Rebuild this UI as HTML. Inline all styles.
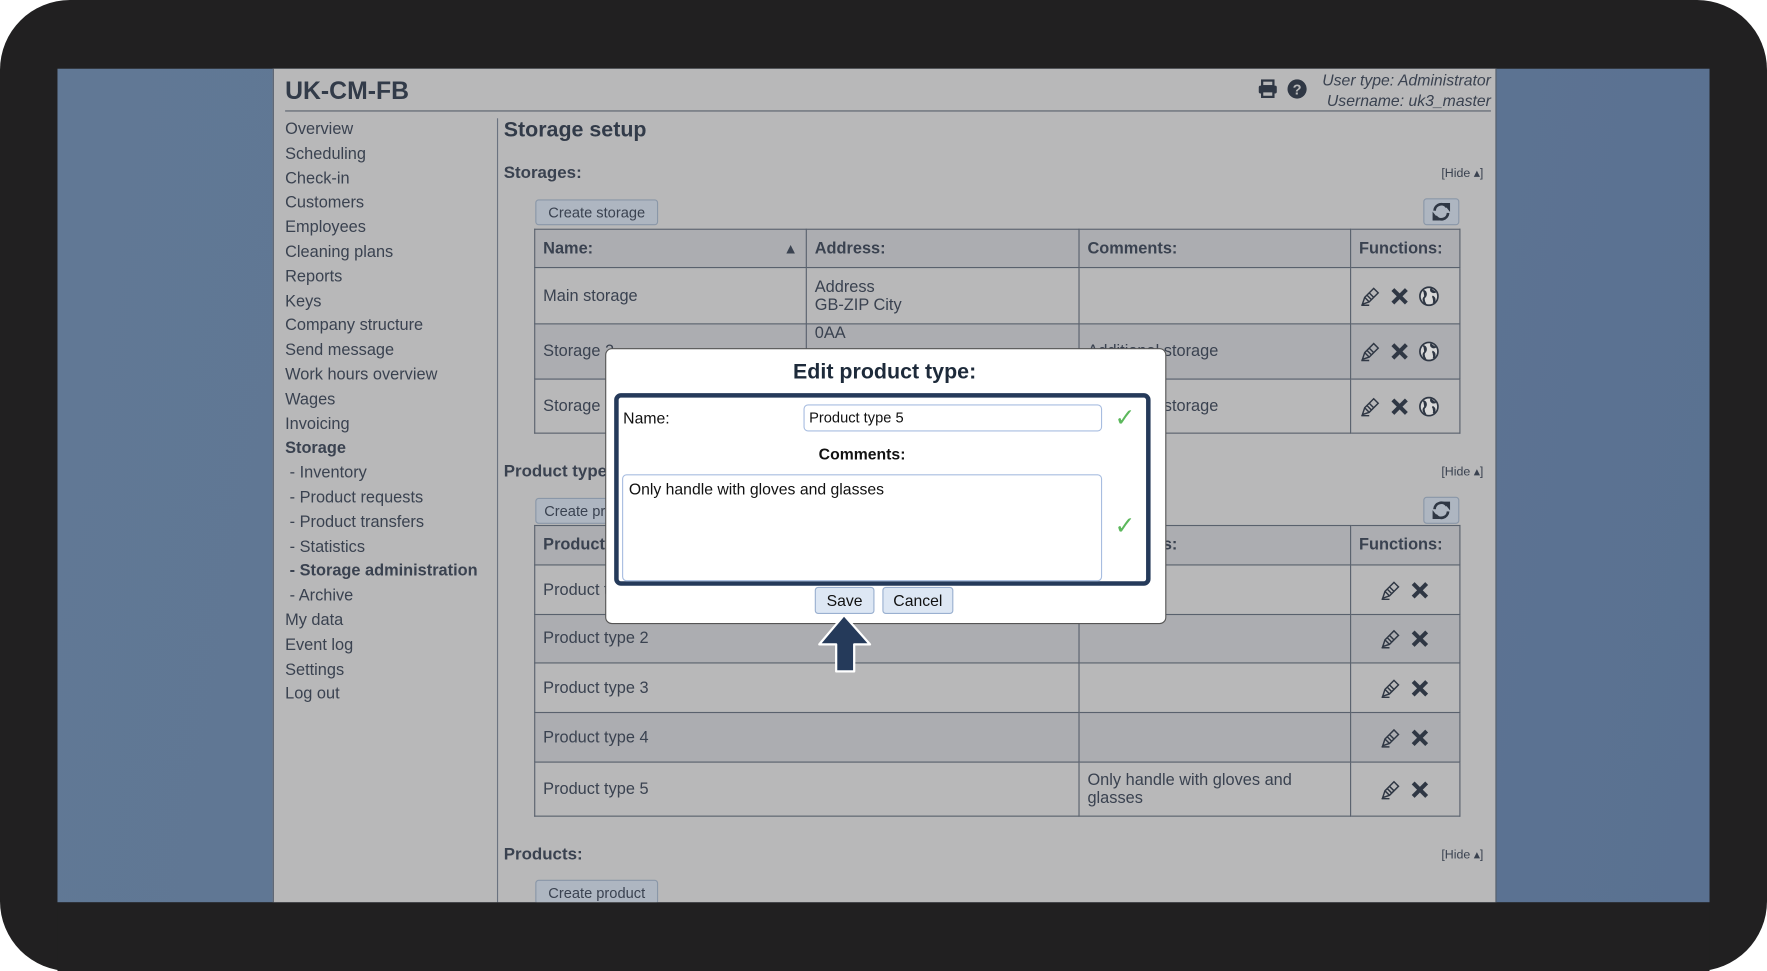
<!DOCTYPE html>
<html><head><meta charset="utf-8"><style>
html,body{margin:0;padding:0;width:1767px;height:971px;overflow:hidden;background:#fff;}
#s{position:absolute;left:0;top:0;width:1568px;height:862px;transform:scale(1.12691,1.1265);transform-origin:0 0;font-family:"Liberation Sans",Arial,sans-serif;color:#3a4250;}
.a{position:absolute;}
.frame{left:0;top:0;width:1568px;height:862px;background:#212021;border-radius:62px;}
.scr{left:51px;top:61px;width:1466px;height:740px;background:linear-gradient(100deg,#617895,#5e7593 60%,#5a7191);overflow:hidden;}
.page{left:242px;top:61px;width:1086px;height:740px;background:#b8b8b9;border-left:1px solid #505a68;border-right:1px solid #505a68;box-sizing:border-box;}
.nav{font-size:14.5px;line-height:21.8px;}
.btn{background:#aeb6c1;border:1px solid #8a97a8;border-radius:3px;font-size:13px;color:#3a4250;text-align:center;box-sizing:border-box;}
table{border-collapse:collapse;position:absolute;font-size:14.5px;color:#3a4250;}
td{border:1px solid #59616d;padding:0 7px;vertical-align:middle;}
th{border:1px solid #59616d;padding:0 7px;text-align:left;font-size:14.5px;background:#acadb1;}
.d{background:#acadb1;}
.hide{font-size:11px;color:#3a4250;}
svg{vertical-align:middle;}
</style></head><body><div id="s">
<div class="a frame"></div>
<div class="a scr"></div>
<div class="a page"></div>
<div class="a" style="left:253px;top:68px;font-size:22px;font-weight:bold;color:#323b49">UK-CM-FB</div>
<div class="a" style="left:253px;top:98px;width:1070px;height:1px;background:#59616d"></div>
<div class="a" style="left:1140px;top:62px;width:183px;text-align:right;font-style:italic;font-size:14px;line-height:18px;color:#3a4250">User type: Administrator<br>Username: uk3_master</div>
<svg class="a" style="left:1116px;top:70px" width="18" height="18" viewBox="0 0 18 18"><rect x="4" y="1.5" width="10" height="5" fill="none" stroke="#2f3744" stroke-width="2"/><rect x="1" y="6" width="16" height="7" rx="1.5" fill="#2f3744"/><rect x="4" y="11" width="10" height="5" fill="#b8b8b9" stroke="#2f3744" stroke-width="2"/></svg>
<svg class="a" style="left:1142px;top:70px" width="18" height="18" viewBox="0 0 18 18"><circle cx="9" cy="9" r="8.5" fill="#2f3744"/><text x="9" y="14" text-anchor="middle" font-family="Liberation Sans" font-weight="bold" font-size="13" fill="#b8b8b9">?</text></svg>
<div class="a nav" style="left:253px;top:105px">Overview<br>Scheduling<br>Check-in<br>Customers<br>Employees<br>Cleaning plans<br>Reports<br>Keys<br>Company structure<br>Send message<br>Work hours overview<br>Wages<br>Invoicing<br><b>Storage</b><br>&nbsp;- Inventory<br>&nbsp;- Product requests<br>&nbsp;- Product transfers<br>&nbsp;- Statistics<br>&nbsp;<b>- Storage administration</b><br>&nbsp;- Archive<br>My data<br>Event log<br>Settings<br>Log out</div>
<div class="a" style="left:441px;top:105px;width:1px;height:696px;background:#6a7280"></div>
<div class="a" style="left:447px;top:105px;font-size:19px;font-weight:bold;color:#323b49">Storage setup</div>
<div class="a" style="left:447px;top:145px;font-size:15px;font-weight:bold">Storages:</div>
<div class="a hide" style="left:1279px;top:147px">[Hide ▴]</div>
<div class="a btn" style="left:475px;top:177px;width:109px;height:23px;line-height:22px">Create storage</div>
<div class="a btn" style="left:1263px;top:176px;width:32px;height:24px"><svg width="30" height="22" viewBox="0 0 30 22"><path d="M9 10a6 6 0 0 1 11-3M21 12a6 6 0 0 1-11 3" fill="none" stroke="#2f3744" stroke-width="2.4"/><path d="M18 4l4 0 0 5z M12 18l-4 0 0-5z" fill="#2f3744" stroke="#2f3744" stroke-width="1.5"/></svg></div>
<table style="left:474px;top:203px;width:822px">
<tr style="height:34px"><th style="width:226px">Name:<span style="float:right;font-size:13px">▲</span></th><th style="width:227px">Address:</th><th style="width:226px">Comments:</th><th>Functions:</th></tr>
<tr style="height:50px"><td>Main storage</td><td>Address<br>GB-ZIP City</td><td></td><td>{F3}</td></tr>
<tr style="height:49px" class="d"><td class="d">Storage 2</td><td class="d" style="vertical-align:top">0AA</td><td class="d">Additional storage</td><td class="d">{F3}</td></tr>
<tr style="height:48px"><td>Storage 3</td><td></td><td>Additional storage</td><td>{F3}</td></tr>
</table>
<div class="a" style="left:447px;top:410px;font-size:15px;font-weight:bold">Product types:</div>
<div class="a hide" style="left:1279px;top:412px">[Hide ▴]</div>
<div class="a btn" style="left:475px;top:442px;width:130px;height:23px;line-height:22px">Create product type</div>
<div class="a btn" style="left:1263px;top:441px;width:32px;height:24px"><svg width="30" height="22" viewBox="0 0 30 22"><path d="M9 10a6 6 0 0 1 11-3M21 12a6 6 0 0 1-11 3" fill="none" stroke="#2f3744" stroke-width="2.4"/><path d="M18 4l4 0 0 5z M12 18l-4 0 0-5z" fill="#2f3744" stroke="#2f3744" stroke-width="1.5"/></svg></div>
<table style="left:474px;top:466px;width:822px">
<tr style="height:35px"><th style="width:468px">Product type:</th><th style="width:226px">Comments:</th><th>Functions:</th></tr>
<tr style="height:44px"><td>Product type 1</td><td></td><td style="text-align:center">{F2}</td></tr>
<tr style="height:43px" class="d"><td class="d">Product type 2</td><td class="d"></td><td class="d" style="text-align:center">{F2}</td></tr>
<tr style="height:44px"><td>Product type 3</td><td></td><td style="text-align:center">{F2}</td></tr>
<tr style="height:44px" class="d"><td class="d">Product type 4</td><td class="d"></td><td class="d" style="text-align:center">{F2}</td></tr>
<tr style="height:48px"><td>Product type 5</td><td>Only handle with gloves and glasses</td><td style="text-align:center">{F2}</td></tr>
</table>
<div class="a" style="left:447px;top:750px;font-size:15px;font-weight:bold">Products:</div>
<div class="a hide" style="left:1279px;top:752px">[Hide ▴]</div>
<div class="a btn" style="left:475px;top:781px;width:109px;height:22px;line-height:22px">Create product</div>
<div class="a" style="left:51px;top:801px;width:1466px;height:61px;background:#212021"></div>
<div class="a" style="left:537px;top:309px;width:496px;height:243px;background:#fff;border-radius:6px;border:1px solid #555"></div>
<div class="a" style="left:537px;top:320px;width:496px;text-align:center;font-size:19px;font-weight:bold;color:#1d2a3a">Edit product type:</div>
<div class="a" style="left:545px;top:349px;width:476px;height:171px;border:4px solid #253a5a;border-radius:6px;box-sizing:border-box"></div>
<div class="a" style="left:553px;top:363px;font-size:14px;color:#111">Name:</div>
<div class="a" style="left:713px;top:359px;width:265px;height:24px;border:1px solid #a8bde0;border-radius:4px;box-sizing:border-box;font-size:13px;color:#111;padding:3px 4px">Product type 5</div>
<div class="a" style="left:989px;top:358px;font-size:22px;color:#5cb85c">✓</div>
<div class="a" style="left:545px;top:395px;width:440px;text-align:center;font-size:14px;font-weight:bold;color:#111">Comments:</div>
<div class="a" style="left:552px;top:421px;width:426px;height:95px;border:1px solid #a8bde0;border-radius:4px;box-sizing:border-box;font-size:14px;color:#111;padding:4px 5px">Only handle with gloves and glasses</div>
<div class="a" style="left:989px;top:454px;font-size:22px;color:#5cb85c">✓</div>
<div class="a btn" style="left:723px;top:521px;width:53px;height:24px;line-height:22px;background:#dde7f4;border-color:#9ab0d0;font-size:14px;color:#111">Save</div>
<div class="a btn" style="left:783px;top:521px;width:63px;height:24px;line-height:22px;background:#dde7f4;border-color:#9ab0d0;font-size:14px;color:#111">Cancel</div>
<svg class="a" style="left:722px;top:543px" width="56" height="58" viewBox="0 0 56 58"><path d="M27 3 L50 29 L36 29 L36 53 L20 53 L20 29 L5 29 Z" fill="#253a5a" stroke="#fff" stroke-width="2" stroke-linejoin="round"/></svg>
</div>
<script>
var P='<svg width="20" height="20" viewBox="0 0 20 20"><path d="M3 17l2-6 8-8 4 4-8 8z M5 11l4 4 M7 9l4 4 M9 7l4 4" fill="none" stroke="#2f3744" stroke-width="1.3"/><path d="M2 18h7" stroke="#2f3744" stroke-width="1.3"/></svg>';
var X='<svg width="20" height="20" viewBox="0 0 20 20" style="margin-left:6px"><path d="M4 4l12 12M16 4L4 16" stroke="#2f3744" stroke-width="3.6"/></svg>';
var G='<svg width="20" height="20" viewBox="0 0 20 20" style="margin-left:6px"><circle cx="10" cy="10" r="8" fill="#d8d8d8" stroke="#2f3744" stroke-width="1.5"/><path d="M5 5c3 1 3 4 1 6s0 4 1 6M12 3c-1 3 2 4 4 3M13 10c2 1 3 3 1 6" fill="#2f3744" stroke="#2f3744" stroke-width="1.6"/></svg>';
var h=document.body.innerHTML.split('{F3}').join(P+X+G).split('{F2}').join(P+X);
document.body.innerHTML=h;
</script>
</body></html>
